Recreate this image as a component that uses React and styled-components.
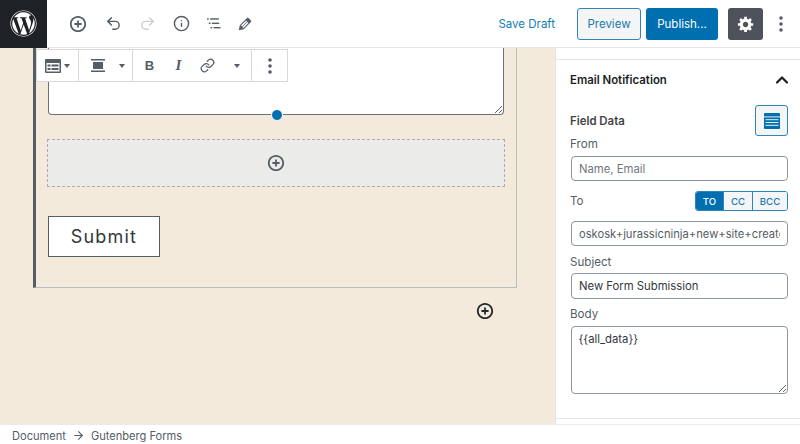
import React from 'react';
import styled, { createGlobalStyle } from 'styled-components';
import { Undo2, Redo2, Info, Link, ChevronUp, ArrowRight } from 'lucide-react';
import { FaWordpress } from 'react-icons/fa';

const GlobalStyle = createGlobalStyle`
    html, body {
        margin: 0;
        padding: 0;
        background: #fff;
    }
    * {
        box-sizing: border-box;
    }
`;

const FONT = `Inter, "Liberation Sans", sans-serif`;
const INSERT_PATH = 'M10 1c-5 0-9 4-9 9s4 9 9 9 9-4 9-9-4-9-9-9zm0 16c-3.9 0-7-3.1-7-7s3.1-7 7-7 7 3.1 7 7-3.1 7-7 7zm1-11H9v3H6v2h3v3h2v-3h3V9h-3V6z';

const PlusCircle = ({ size = 20, color = '#555d66' }) => (
    <svg width={size} height={size} viewBox="0 0 20 20" fill={color}>
        <path d={INSERT_PATH} />
    </svg>
);

const ListView = () => (
    <svg width="14" height="13" viewBox="0 0 16 14" fill="#555d66">
        <rect x="0" y="1" width="2" height="1.6" />
        <rect x="3.5" y="1" width="10" height="1.6" />
        <rect x="2" y="6" width="2" height="1.6" />
        <rect x="5.5" y="6" width="8.5" height="1.6" />
        <rect x="4" y="11" width="2" height="1.6" />
        <rect x="7.5" y="11" width="8" height="1.6" />
    </svg>
);

const Pencil = () => (
    <svg width="18" height="18" viewBox="0 0 20 20" fill="#555d66">
        <path d="M13.89 3.39l2.71 2.72c.46.46.42 1.24.03 1.64l-8.01 8.02-5.56 1.16 1.16-5.58s7.6-7.63 7.99-8.03c.39-.39 1.22-.39 1.68.07zm-2.73 2.79l-5.59 5.61 1.11 1.11 5.54-5.65zm-2.97 8.23l5.58-5.6-1.07-1.08-5.59 5.6z" />
    </svg>
);

const Gear = () => (
    <svg width="18" height="18" viewBox="0 0 20 20" fill="#fff">
        <path d="M18 12h-2.18c-.17.7-.44 1.35-.81 1.93l1.54 1.54-2.1 2.1-1.54-1.54c-.58.36-1.23.63-1.91.79V19H8v-2.18c-.68-.16-1.33-.43-1.91-.79l-1.54 1.54-2.12-2.12 1.54-1.54c-.36-.58-.63-1.23-.79-1.91H1V9.03h2.17c.16-.7.44-1.35.8-1.94L2.43 5.55l2.1-2.1 1.54 1.54c.58-.37 1.24-.64 1.93-.81V2h3v2.18c.68.16 1.33.43 1.91.79l1.54-1.54 2.12 2.12-1.54 1.54c.36.59.64 1.24.8 1.94H18V12zm-8.5 1.5c1.66 0 3-1.34 3-3s-1.34-3-3-3-3 1.34-3 3 1.34 3 3 3z" />
    </svg>
);

const Kebab = ({ color = '#555d66' }) => (
    <svg width="4" height="16" viewBox="0 0 4 16" fill={color}>
        <circle cx="2" cy="2" r="1.8" />
        <circle cx="2" cy="8" r="1.8" />
        <circle cx="2" cy="14" r="1.8" />
    </svg>
);

const FormIcon = () => (
    <svg width="16" height="14" viewBox="0 0 16 14">
        <rect width="16" height="14" rx="1" fill="#555d66" />
        <rect x="1.5" y="4" width="13" height="8.5" fill="#fff" />
        <rect x="2.5" y="5.5" width="3" height="2" fill="#555d66" />
        <rect x="6.5" y="5.5" width="7" height="2" fill="#555d66" />
        <rect x="2.5" y="9" width="3" height="2" fill="#555d66" />
        <rect x="6.5" y="9" width="7" height="2" fill="#555d66" />
    </svg>
);

const AlignIcon = () => (
    <svg width="14" height="13" viewBox="0 0 14 13" fill="#555d66">
        <rect x="0" y="0" width="14" height="1.5" />
        <rect x="2" y="3" width="10" height="7" />
        <rect x="0" y="11.5" width="14" height="1.5" />
    </svg>
);

const Caret = () => (
    <svg width="6" height="4" viewBox="0 0 6 4" fill="#555d66">
        <path d="M0 0h6L3 4z" />
    </svg>
);

const TableIcon = () => (
    <svg width="16" height="16" viewBox="0 0 16 16">
        <rect width="16" height="16" rx="1" fill="#006fb0" />
        <rect x="0" y="3.4" width="16" height="1" fill="#e6f1f7" />
        <rect x="1.5" y="6.2" width="13" height="1" fill="#e6f1f7" />
        <rect x="1.5" y="9" width="13" height="1" fill="#e6f1f7" />
        <rect x="1.5" y="11.8" width="13" height="1" fill="#e6f1f7" />
    </svg>
);

const App = () => {
    return (
        <Page>
            <GlobalStyle />
            <Header>
                <Logo>
                    <FaWordpress size={27} color="#fff" />
                </Logo>
                <Tools>
                    <ToolButton $width={34.5}><PlusCircle size={18} /></ToolButton>
                    <ToolButton $width={35}><Undo2 size={17} color="#555d66" strokeWidth={2} /></ToolButton>
                    <ToolButton $width={34}><Redo2 size={17} color="#ccd0d4" strokeWidth={2} /></ToolButton>
                    <ToolButton $width={33}><Info size={17} color="#555d66" strokeWidth={2} /></ToolButton>
                    <ToolButton $width={32}><ListView /></ToolButton>
                    <ToolButton $width={31.5}><Pencil /></ToolButton>
                </Tools>
                <Actions>
                    <SaveDraft>Save Draft</SaveDraft>
                    <PreviewButton>Preview</PreviewButton>
                    <PublishButton>Publish...</PublishButton>
                    <SettingsButton><Gear /></SettingsButton>
                    <MoreButton><Kebab /></MoreButton>
                </Actions>
            </Header>
            <Main>
                <Canvas>
                    <BlockToolbar>
                        <ToolbarGroup $width={42} $pad={8}>
                            <FormIcon />
                            <CaretSlot $gap={3}><Caret /></CaretSlot>
                        </ToolbarGroup>
                        <ToolbarGroup $width={54} $pad={12}>
                            <AlignIcon />
                            <CaretSlot $gap={14}><Caret /></CaretSlot>
                        </ToolbarGroup>
                        <ToolbarGroup $width={119} $pad={2}>
                            <FormatSlot><BoldGlyph>B</BoldGlyph></FormatSlot>
                            <FormatSlot><ItalicGlyph>I</ItalicGlyph></FormatSlot>
                            <FormatSlot><Link size={15} color="#555d66" strokeWidth={2} /></FormatSlot>
                            <FormatSlot><Caret /></FormatSlot>
                        </ToolbarGroup>
                        <ToolbarGroup $width={35} $pad={16} $last>
                            <Kebab />
                        </ToolbarGroup>
                    </BlockToolbar>
                    <FormBlock>
                        <MessageBox readOnly />
                        <ResizeDot />
                        <Placeholder>
                            <PlusCircle size={18} />
                        </Placeholder>
                        <SubmitButton>Submit</SubmitButton>
                    </FormBlock>
                    <SiblingInserter>
                        <PlusCircle size={18} color="#23282d" />
                    </SiblingInserter>
                </Canvas>
                <Sidebar>
                    <Panel>
                        <PanelTitle>
                            Email Notification
                            <TitleChevron><ChevronUp size={20} color="#191e23" strokeWidth={2.6} /></TitleChevron>
                        </PanelTitle>
                        <FieldDataRow>
                            <FieldDataLabel>Field Data</FieldDataLabel>
                            <IconButton><TableIcon /></IconButton>
                        </FieldDataRow>
                        <Label>From</Label>
                        <TextInput $mt={4} placeholder="Name, Email" readOnly />
                        <ToRow>
                            <Label>To</Label>
                            <Segments>
                                <Segment $width={28} $active>TO</Segment>
                                <Segment $width={29}>CC</Segment>
                                <Segment $width={34} $last>BCC</Segment>
                            </Segments>
                        </ToRow>
                        <TextInput $mt={10} value="oskosk+jurassicninja+new+site+created@gmail.com" readOnly $muted />
                        <Label $mt={8}>Subject</Label>
                        <TextInput $mt={3} $height={26} value="New Form Submission" readOnly />
                        <Label $mt={7}>Body</Label>
                        <BodyArea value="{{all_data}}" readOnly />
                    </Panel>
                </Sidebar>
            </Main>
            <Footer>
                Document
                <ArrowRight size={13} color="#555d66" strokeWidth={2} />
                Gutenberg Forms
            </Footer>
        </Page>
    );
};
export default App;

const Page = styled.div`
    width: 800px;
    height: 444px;
    display: flex;
    flex-direction: column;
    overflow: hidden;
    font-family: ${FONT};
    color: #32373c;
    background: #fff;
`;

const Header = styled.header`
    height: 48px;
    flex: none;
    display: flex;
    align-items: center;
    background: #fff;
    border-bottom: 1px solid #e2e4e7;
`;

const Logo = styled.div`
    width: 47px;
    height: 48px;
    flex: none;
    display: flex;
    align-items: center;
    justify-content: center;
    background: #1e2227;
`;

const Tools = styled.div`
    display: flex;
    align-items: center;
    margin-left: 14px;
`;

const ToolButton = styled.div`
    width: ${(props) => props.$width}px;
    height: 24px;
    display: flex;
    align-items: center;
    justify-content: center;
`;

const Actions = styled.div`
    margin-left: auto;
    display: flex;
    align-items: center;
    padding-right: 17px;
`;

const SaveDraft = styled.span`
    font-size: 11.5px;
    color: #137eb3;
    margin-right: 22px;
`;

const PreviewButton = styled.div`
    width: 64px;
    height: 32px;
    display: flex;
    align-items: center;
    justify-content: center;
    font-size: 11.5px;
    color: #1a7aab;
    background: #f3f5f6;
    border: 1px solid #2f86b3;
    border-radius: 3px;
    margin-right: 5px;
`;

const PublishButton = styled.div`
    width: 72px;
    height: 32px;
    display: flex;
    align-items: center;
    justify-content: center;
    font-size: 11.5px;
    color: #fff;
    background: #006fb0;
    border-radius: 3px;
    margin-right: 10px;
`;

const SettingsButton = styled.div`
    width: 35px;
    height: 32px;
    display: flex;
    align-items: center;
    justify-content: center;
    background: #4d525c;
    border-radius: 3px;
    margin-right: 16px;
`;

const MoreButton = styled.div`
    display: flex;
    align-items: center;
`;

const Main = styled.div`
    flex: 1;
    min-height: 0;
    display: flex;
`;

const Canvas = styled.div`
    position: relative;
    flex: 1;
    overflow: hidden;
    background: #f3eadb;
    padding-left: 33px;
`;

const BlockToolbar = styled.div`
    position: absolute;
    z-index: 2;
    top: 1px;
    left: 36px;
    height: 33px;
    display: flex;
    background: #fff;
    border: 1px solid #d5d8dc;
`;

const ToolbarGroup = styled.div`
    width: ${(props) => props.$width}px;
    display: flex;
    align-items: center;
    padding-left: ${(props) => props.$pad}px;
    border-right: ${(props) => (props.$last ? 'none' : '1px solid #d5d8dc')};
`;

const FormatSlot = styled.span`
    width: 29px;
    display: flex;
    align-items: center;
    justify-content: center;
`;

const CaretSlot = styled.span`
    display: flex;
    margin-left: ${(props) => props.$gap}px;
`;

const BoldGlyph = styled.span`
    font-family: "Liberation Sans", sans-serif;
    font-weight: 700;
    font-size: 13px;
    color: #555d66;
`;

const ItalicGlyph = styled.span`
    font-family: "Liberation Serif", serif;
    font-weight: 700;
    font-style: italic;
    font-size: 15px;
    color: #555d66;
`;

const FormBlock = styled.div`
    position: relative;
    width: 484px;
    display: flex;
    flex-direction: column;
    align-items: flex-start;
    padding: 0 0 30px 12px;
    border-left: 3px solid #555d66;
    border-right: 1px solid #b8bdc3;
    border-bottom: 1px solid #b8bdc3;
`;

const MessageBox = styled.textarea`
    display: block;
    width: 456px;
    height: 67px;
    background: #fff;
    border: 1px solid #6b7178;
    border-top: none;
    border-radius: 0 0 4px 4px;
    resize: vertical;
    outline: none;
`;

const ResizeDot = styled.span`
    position: absolute;
    top: 61px;
    left: 235px;
    width: 12px;
    height: 12px;
    border-radius: 50%;
    background: #006fb0;
    border: 1px solid #fff;
`;

const Placeholder = styled.div`
    width: 458px;
    height: 48px;
    margin: 24px 0 0 -1px;
    display: flex;
    align-items: center;
    justify-content: center;
    background: #ebebe9;
    border: 1px dashed #a9adb1;
`;

const SubmitButton = styled.div`
    width: 112px;
    height: 41px;
    margin-top: 29px;
    display: flex;
    align-items: center;
    justify-content: center;
    background: #fff;
    border: 1px solid #555d66;
    font-size: 18px;
    letter-spacing: 1.2px;
    color: #32373c;
`;

const SiblingInserter = styled.div`
    position: absolute;
    top: 254px;
    left: 476px;
    display: flex;
`;

const Sidebar = styled.aside`
    width: 245px;
    flex: none;
    padding-top: 11px;
    background: #fff;
    border-left: 1px solid #e2e4e7;
`;

const Panel = styled.section`
    height: 360px;
    padding: 0 12px 0 14px;
    border-top: 1px solid #e2e4e7;
    border-bottom: 1px solid #e2e4e7;
`;

const PanelTitle = styled.div`
    height: 40px;
    display: flex;
    align-items: center;
    justify-content: space-between;
    font-size: 11.4px;
    font-weight: 600;
    color: #191e23;
`;

const TitleChevron = styled.span`
    display: flex;
    margin-right: -4px;
`;

const FieldDataRow = styled.div`
    height: 31px;
    margin-top: 5px;
    display: flex;
    align-items: center;
    justify-content: space-between;
`;

const FieldDataLabel = styled.span`
    font-size: 11.4px;
    font-weight: 600;
    color: #444;
`;

const IconButton = styled.div`
    width: 33px;
    height: 31px;
    display: flex;
    align-items: center;
    justify-content: center;
    background: #f3f5f6;
    border: 1px solid #2f86b3;
    border-radius: 3px;
`;

const Label = styled.div`
    height: 16px;
    margin-top: ${(props) => props.$mt || 0}px;
    font-size: 11.6px;
    line-height: 16px;
    color: #555d66;
`;

const TextInput = styled.input`
    display: block;
    width: 217px;
    height: ${(props) => props.$height || 25}px;
    margin: ${(props) => props.$mt || 0}px 0 0 1px;
    padding: 0 7px;
    font-family: ${FONT};
    font-size: ${(props) => (props.$muted ? 11.2 : 11.3)}px;
    color: ${(props) => (props.$muted ? '#555d66' : '#32373c')};
    background: #fff;
    border: 1px solid #8d96a0;
    border-radius: 4px;
    outline: none;
    &::placeholder {
        color: #72777c;
        opacity: 1;
    }
`;

const ToRow = styled.div`
    height: 20px;
    margin-top: 10px;
    display: flex;
    align-items: center;
    justify-content: space-between;
`;

const Segments = styled.div`
    height: 20px;
    display: flex;
    border: 1px solid #2f86b3;
    border-radius: 3px;
    overflow: hidden;
`;

const Segment = styled.div`
    width: ${(props) => props.$width}px;
    display: flex;
    align-items: center;
    justify-content: center;
    font-size: 9.6px;
    font-weight: 500;
    color: ${(props) => (props.$active ? '#fff' : '#1a7aab')};
    background: ${(props) => (props.$active ? '#006fb0' : '#f3f5f6')};
    border-right: ${(props) => (props.$last ? 'none' : '1px solid #2f86b3')};
`;

const BodyArea = styled.textarea`
    display: block;
    width: 217px;
    height: 68px;
    margin: 4px 0 0 0.5px;
    padding: 5px 7px;
    font-family: ${FONT};
    font-size: 11.3px;
    color: #32373c;
    background: #fff;
    border: 1px solid #8d96a0;
    border-radius: 4px;
    outline: none;
    resize: vertical;
`;

const Footer = styled.footer`
    height: 20px;
    flex: none;
    display: flex;
    align-items: center;
    gap: 6px;
    padding: 2px 0 0 12px;
    font-size: 11.1px;
    color: #555d66;
    background: #fff;
    border-top: 1px solid #e8eaeb;
`;
